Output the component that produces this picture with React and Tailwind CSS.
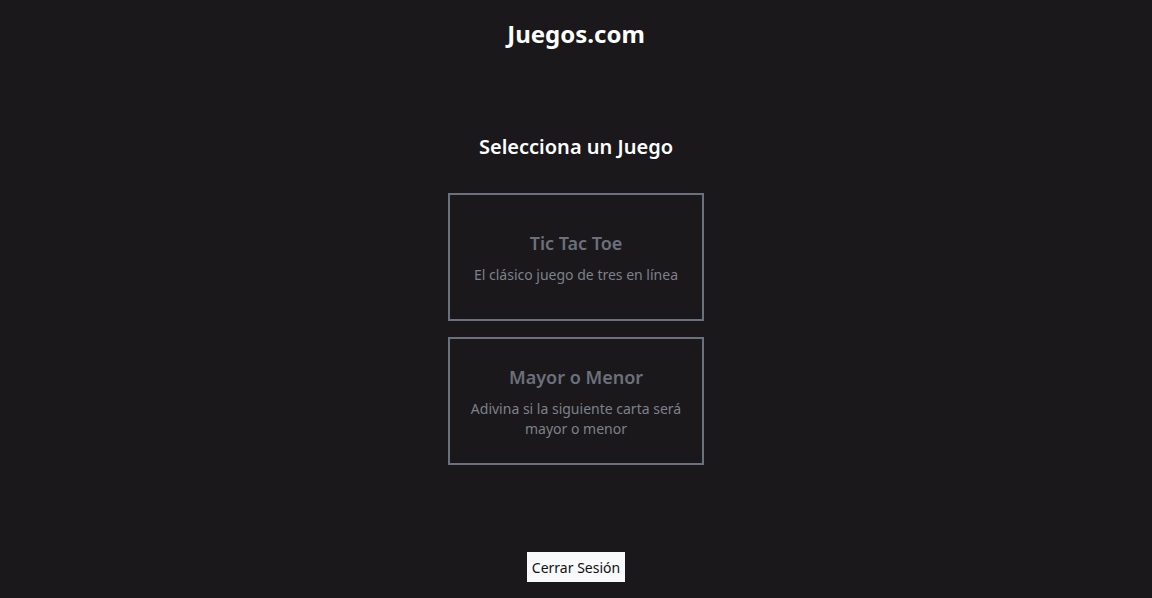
export default function App() {
  const games = [
    { title: "Tic Tac Toe", desc: "El clásico juego de tres en línea" },
    { title: "Mayor o Menor", desc: "Adivina si la siguiente carta será mayor o menor" },
  ];
  return (
    <div
      className="min-h-[598px] w-full bg-[#1a181b] flex flex-col items-center"
      style={{ fontFamily: '"Noto Sans", "Open Sans", sans-serif' }}
    >
      <h1 className="mt-[18px] text-2xl leading-8 font-bold text-white">Juegos.com</h1>
      <h2 className="mt-[83px] text-xl leading-7 font-semibold text-white">Selecciona un Juego</h2>
      <div className="mt-8 flex flex-col gap-4">
        {games.map((g) => (
          <div
            key={g.title}
            className="w-64 h-32 border-2 border-[#6b717c] flex flex-col items-center justify-center px-5 text-center"
          >
            <div className="text-lg leading-7 font-semibold text-[#6b707b]">{g.title}</div>
            <div className="mt-2 text-sm leading-5 text-[#7d818a]">{g.desc}</div>
          </div>
        ))}
      </div>
      <button className="mt-[87px] h-[30px] px-[5px] pt-px bg-[#f8f9fb] text-[#111] text-sm">
        Cerrar Sesión
      </button>
    </div>
  );
}
